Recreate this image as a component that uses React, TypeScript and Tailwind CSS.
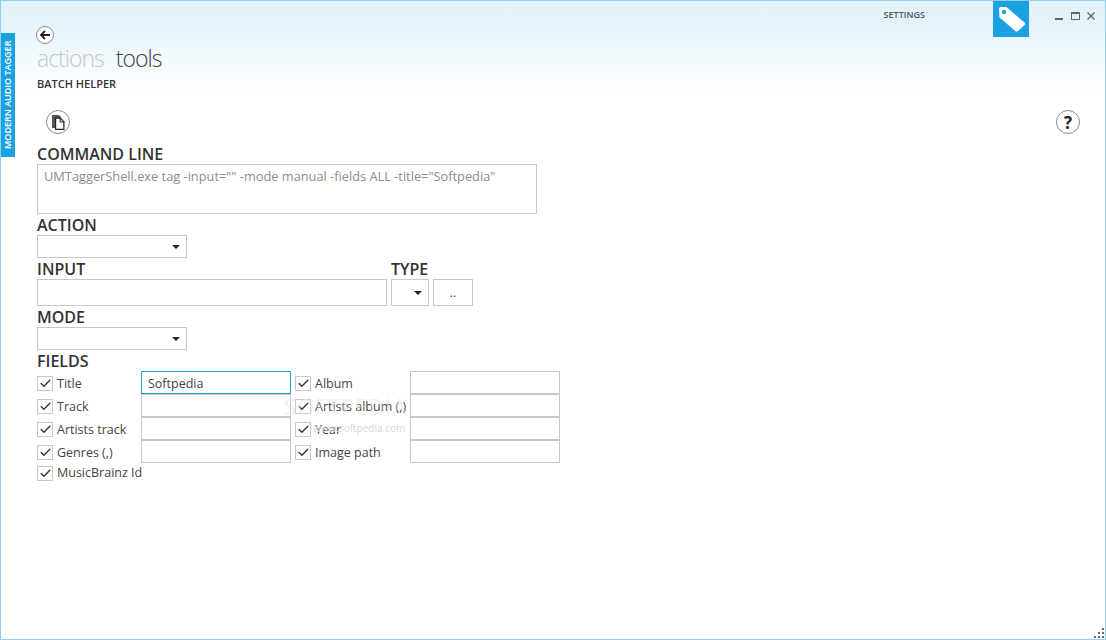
import React from 'react';
import { Check } from 'lucide-react';

const font = { fontFamily: '"Open Sans", "Noto Sans", sans-serif' };

function Label({ children }: { children: React.ReactNode }) {
  return <div className="h-[21px] text-[16px] leading-[23px] font-semibold text-[#333]">{children}</div>;
}

function Select({ className }: { className: string }) {
  return (
    <div className={`flex items-center justify-end border border-[#c8c8c8] bg-white pr-[6px] ${className}`}>
      <div className="h-0 w-0 border-x-[4px] border-t-[4px] border-x-transparent border-t-[#222]" />
    </div>
  );
}

function CheckBox() {
  return (
    <div className="flex h-[15px] w-[16px] shrink-0 items-center justify-center border border-[#c8c8c8] bg-white">
      <Check size={13} strokeWidth={2.5} className="text-[#333]" />
    </div>
  );
}

function Field({ label, value, focused }: { label: string; value?: string; focused?: boolean }) {
  return (
    <>
      <div className="flex h-[23px] items-center gap-[4px] pt-[2px]">
        <CheckBox />
        <span className="mt-[2px] whitespace-nowrap text-[12.5px] text-[#444]">{label}</span>
      </div>
      <div
        className={`flex h-[23px] items-center border bg-white px-[6px] pt-[4px] text-[12.5px] text-[#444] ${
          focused ? 'border-[#1ba1e2]' : 'border-[#c8c8c8]'
        }`}
      >
        {value}
      </div>
    </>
  );
}

function RoundButton({ children, size }: { children: React.ReactNode; size: string }) {
  return (
    <div className={`flex items-center justify-center rounded-full border border-[#8a8a8a] bg-white ${size}`}>
      {children}
    </div>
  );
}

export default function App() {
  return (
    <div
      style={font}
      className="relative flex h-[640px] w-[1106px] flex-col overflow-hidden border border-[#8fd3f3] bg-gradient-to-b from-[#e2f3fc] from-[3%] to-white to-[14%]"
    >
      {/* side tab */}
      <div className="absolute left-0 top-[32px] flex h-[124px] w-[14px] rotate-180 items-center justify-center bg-[#1ba1e2] text-[9px] font-semibold whitespace-nowrap text-white [writing-mode:vertical-rl]">
        MODERN AUDIO TAGGER
      </div>

      <div className="flex pl-[36px]">
        <div className="flex-1 pt-[25px]">
          <div className="ml-[-1px]">
            <RoundButton size="h-[18px] w-[18px]">
              <svg width="12" height="12" viewBox="0 0 12 12" fill="none" stroke="#222" strokeWidth="1.8">
                <path d="M11 6H2M6 2L2 6l4 4" />
              </svg>
            </RoundButton>
          </div>
          <div className="mt-[-2px] flex h-[32px] items-center gap-[12px] text-[23px] leading-[32px] font-light tracking-[-1px]">
            <span className="text-[#c4c6c8]">actions</span>
            <span className="text-[#444]">tools</span>
          </div>
          <div className="mt-[2px] h-[16px] text-[11px] leading-[16px] font-semibold text-[#333]">BATCH HELPER</div>
        </div>
        <div className="flex h-[36px] items-start">
          <span className="mr-[68px] pt-[7px] text-[9px] leading-[13px] font-semibold text-[#555]">SETTINGS</span>
          <div className="mr-[26px] h-[36px] w-[36px] bg-[#1ba1e2]">
            <svg width="36" height="36" viewBox="0 0 36 36">
              <path
                fillRule="evenodd"
                fill="#fff"
                d="M6 8Q6 6 8 6H13.500L31.500 21.500Q32.500 23 31.500 24L25 30Q23.500 31 22.300 30L6.500 16.500zM11 8.800a2.200 2.200 0 1 0 .01 0z"
              />
            </svg>
          </div>
          <div className="mr-[10px] flex items-center gap-[8px] pt-[11px]">
            <div className="mt-[5px] h-[2px] w-[8px] bg-[#666]" />
            <div className="h-[8px] w-[9px] border border-t-2 border-[#666]" />
            <svg className="ml-[-1px]" width="8" height="8" viewBox="0 0 8 8" stroke="#666" strokeWidth="1.4">
              <path d="M.5.500l7 7M7.500.500l-7 7" />
            </svg>
          </div>
        </div>
      </div>

      <div className="flex flex-col pl-[36px] pr-[25px]">
        {/* toolbar */}
        <div className="mt-[18px] flex items-center justify-between pl-[9px]">
          <RoundButton size="h-[24px] w-[24px]">
            <svg width="16" height="17" viewBox="0 0 16 17">
              <path d="M2 1h7l2 2v11H2z" fill="#555" />
              <path d="M5 3.500h5.500l4 4V16H5z" fill="#222" />
              <path d="M6.200 4.700h3.500v3.800h3.600v6.300H6.200zM10.700 5.200l2.300 2.300h-2.300z" fill="#fff" />
            </svg>
          </RoundButton>
          <RoundButton size="h-[24px] w-[24px]">
            <span className="text-[17px] leading-none font-bold text-[#222]">?</span>
          </RoundButton>
        </div>

        <div className="mt-[9px]">
          <Label>COMMAND LINE</Label>
        </div>
        <div className="h-[50px] w-[500px] border border-[#c8c8c8] bg-white px-[6px] pt-[2px] text-[12.8px] leading-[18px] text-[#8c8c8c]">
          UMTaggerShell.exe tag -input="" -mode manual -fields ALL -title="Softpedia"
        </div>

        <Label>ACTION</Label>
        <Select className="h-[23px] w-[150px]" />

        <div className="flex gap-[4px]">
          <div className="w-[350px]">
            <Label>INPUT</Label>
            <div className="h-[27px] border border-[#c8c8c8] bg-white" />
          </div>
          <div>
            <Label>TYPE</Label>
            <div className="flex gap-[4px]">
              <Select className="h-[27px] w-[38px]" />
              <div className="flex h-[27px] w-[40px] items-center justify-center border border-[#c8c8c8] bg-white text-[12px] text-[#444]">
                ..
              </div>
            </div>
          </div>
        </div>

        <Label>MODE</Label>
        <Select className="h-[23px] w-[150px]" />

        <Label>FIELDS</Label>
        <div className="grid w-[523px] grid-cols-[104px_150px_119px_150px]">
          <Field label="Title" value="Softpedia" focused />
          <div className="contents [&>div:first-child]:pl-[4px]">
            <Field label="Album" />
          </div>
          <Field label="Track" />
          <div className="contents [&>div:first-child]:pl-[4px]">
            <Field label="Artists album (,)" />
          </div>
          <Field label="Artists track" />
          <div className="contents [&>div:first-child]:pl-[4px]">
            <Field label="Year" />
          </div>
          <Field label="Genres (,)" />
          <div className="contents [&>div:first-child]:pl-[4px]">
            <Field label="Image path" />
          </div>
        </div>
        <div className="flex h-[20px] items-center gap-[4px]">
          <CheckBox />
          <span className="text-[12.5px] text-[#444]">MusicBrainz Id</span>
        </div>
      </div>

      {/* watermark */}
      <div className="pointer-events-none absolute left-[283px] top-[389px] text-[22px] tracking-[1px] whitespace-nowrap text-[#e2e2e2] opacity-50">
        SOFTPEDIA
      </div>
      <div className="pointer-events-none absolute left-[312px] top-[420px] text-[10px] whitespace-nowrap text-[#d8d8d8]">
        www.softpedia.com
      </div>

      {/* resize grip */}
      <div className="absolute bottom-[1px] right-[1px] grid grid-cols-3 gap-[2px]">
        {[0, 0, 1, 0, 1, 1, 1, 1, 1].map((on, i) => (
          <div key={i} className={`h-[2px] w-[2px] ${on ? 'bg-[#666]' : ''}`} />
        ))}
      </div>
    </div>
  );
}
